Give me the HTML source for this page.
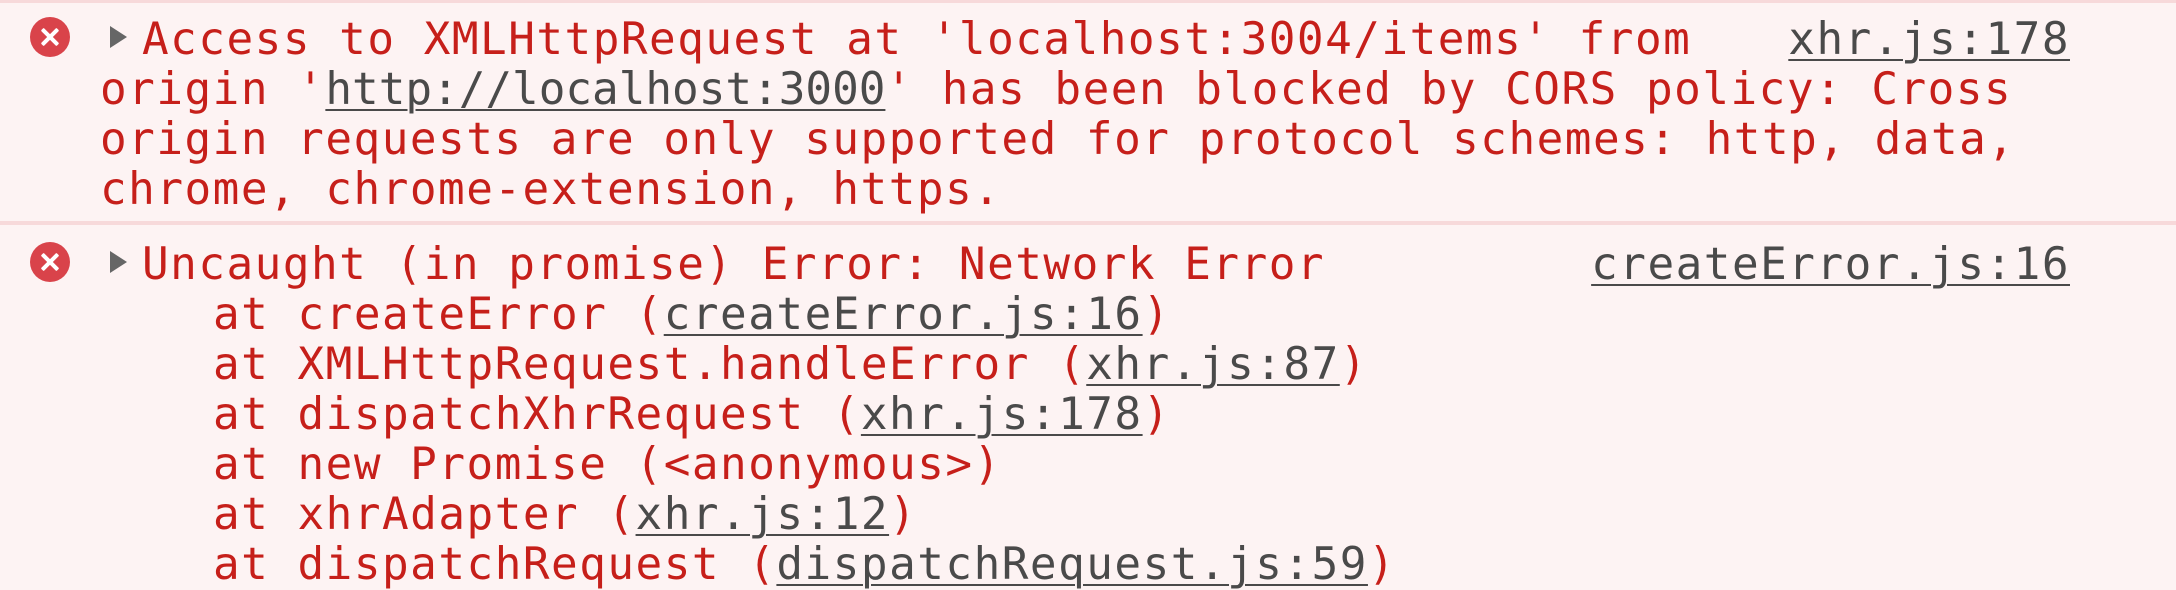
<!DOCTYPE html>
<html><head><meta charset="utf-8"><style>
html,body{margin:0;padding:0;}
body{width:2176px;height:590px;background:#fdf3f3;position:relative;overflow:hidden;font-family:"DejaVu Sans Mono","Liberation Mono",monospace;font-size:44.3px;letter-spacing:1.5px;color:#c61f1a;}
.l{position:absolute;white-space:pre;line-height:50px;height:50px;}
.r{right:106px;text-align:right;}
.u{color:#4a4a4a;text-decoration:underline;text-decoration-thickness:2px;text-underline-offset:5px;}
.sep{position:absolute;left:0;width:2176px;height:4px;background:#f7d9da;}
.ic{position:absolute;width:40px;height:40px;border-radius:50%;background:#d9434a;}
.ic:before,.ic:after{content:"";position:absolute;left:18px;top:9px;width:4px;height:22px;background:#fff;border-radius:1px;transform:rotate(45deg);}
.ic:after{transform:rotate(-45deg);}
.ar{position:absolute;width:0;height:0;border-left:17px solid #666;border-top:11px solid transparent;border-bottom:11px solid transparent;}
</style></head><body>
<div class="sep" style="top:0;height:3px"></div>
<div class="ic" style="left:30px;top:17px"></div>
<div class="ar" style="left:110px;top:26px"></div>
<div class="l" style="left:142px;top:15px">Access to XMLHttpRequest at 'localhost:3004/items' from</div>
<div class="l r" style="top:15px"><span class="u">xhr.js:178</span></div>
<div class="l" style="left:100px;top:65px">origin '<span class="u" style="letter-spacing:0">http://localhost:3000</span>' has been blocked by CORS policy: Cross</div>
<div class="l" style="left:100px;top:115px">origin requests are only supported for protocol schemes: http, data,</div>
<div class="l" style="left:100px;top:165px">chrome, chrome-extension, https.</div>
<div class="sep" style="top:221px"></div>
<div class="ic" style="left:30px;top:242px"></div>
<div class="ar" style="left:110px;top:251px"></div>
<div class="l" style="left:142px;top:240px">Uncaught (in promise) Error: Network Error</div>
<div class="l r" style="top:240px"><span class="u">createError.js:16</span></div>
<div class="l" style="left:213px;top:290px">at createError (<span class="u">createError.js:16</span>)</div>
<div class="l" style="left:213px;top:340px">at XMLHttpRequest.handleError (<span class="u">xhr.js:87</span>)</div>
<div class="l" style="left:213px;top:390px">at dispatchXhrRequest (<span class="u">xhr.js:178</span>)</div>
<div class="l" style="left:213px;top:440px">at new Promise (&lt;anonymous&gt;)</div>
<div class="l" style="left:213px;top:490px">at xhrAdapter (<span class="u">xhr.js:12</span>)</div>
<div class="l" style="left:213px;top:540px">at dispatchRequest (<span class="u">dispatchRequest.js:59</span>)</div>
</body></html>
